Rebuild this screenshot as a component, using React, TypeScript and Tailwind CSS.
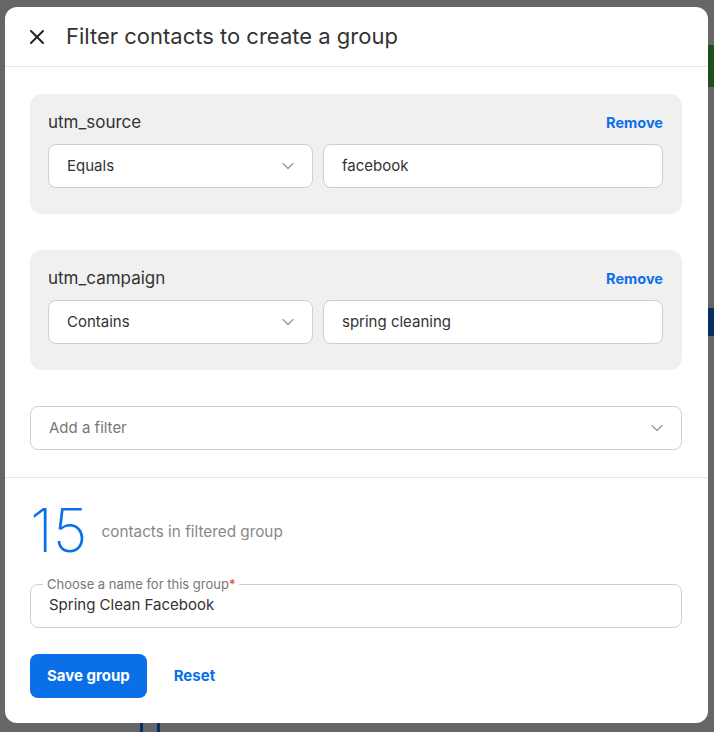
import React from "react";
import { X, ChevronDown } from "lucide-react";

const filters = [
  { field: "utm_source", op: "Equals", value: "facebook" },
  { field: "utm_campaign", op: "Contains", value: "spring cleaning" },
];

function FilterCard({ field, op, value }: { field: string; op: string; value: string }) {
  return (
    <div className="rounded-xl bg-[#f0f0f0] pl-[18px] pr-[19px] pt-[17px] pb-[26px]">
      <div className="flex h-[24px] items-center justify-between">
        <span className="text-[17px] text-[#333]">{field}</span>
        <button className="text-[14.5px] font-bold text-[#0b6fe8]">Remove</button>
      </div>
      <div className="mt-[9px] flex gap-[10px]">
        <div className="flex h-[44px] w-[265px] items-center justify-between rounded-lg border border-[#cfcfcf] bg-white pl-[18px] pr-[14px]">
          <span className="text-[15px] text-[#333]">{op}</span>
          <ChevronDown className="h-5 w-5 text-[#999]" strokeWidth={1.5} />
        </div>
        <div className="flex h-[44px] flex-1 items-center rounded-lg border border-[#cfcfcf] bg-white px-[18px]">
          <span className="text-[15px] text-[#333]">{value}</span>
        </div>
      </div>
    </div>
  );
}

export default function App() {
  return (
    <div className="relative h-[732px] w-[714px] overflow-hidden bg-[#666] font-['Inter',sans-serif]">
      {/* dimmed page behind the dialog */}
      <div className="absolute right-0 top-[45px] h-[42px] w-[6px] bg-[#1e4d1e]" />
      <div className="absolute right-0 top-[308px] h-[28px] w-[6px] bg-[#0a2c63]" />
      <div className="absolute left-[140px] top-[713px] h-[30px] w-[20px] rounded-full border-[3px] border-[#0a2c63]" />

      <div className="absolute left-[5px] top-[7px] flex h-[716px] w-[703px] flex-col rounded-xl bg-white">
        <div className="flex h-[60px] items-center border-b border-[#e5e5e5] pl-[20px]">
          <X className="h-[24px] w-[24px] text-[#222]" strokeWidth={2} />
          <h1 className="ml-[17px] text-[22px] text-[#333]">Filter contacts to create a group</h1>
        </div>

        <div className="flex flex-col gap-[36px] pl-[25px] pr-[26px] pt-[27px]">
          {filters.map((f) => (
            <FilterCard key={f.field} {...f} />
          ))}
          <div className="flex h-[44px] items-center justify-between rounded-lg border border-[#cfcfcf] bg-white pl-[18px] pr-[14px]">
            <span className="text-[15px] text-[#777]">Add a filter</span>
            <ChevronDown className="h-5 w-5 text-[#999]" strokeWidth={1.5} />
          </div>
        </div>

        <div className="mt-[27px] border-t border-[#e5e5e5] pl-[25px] pr-[26px] pt-[22px]">
          <div className="flex h-[60px] items-center gap-[14px]">
            <span className="text-[60px] font-extralight leading-[60px] text-[#0b6fe8]">15</span>
            <span className="pt-[4px] text-[15.3px] text-[#888]">contacts in filtered group</span>
          </div>

          <fieldset className="mt-[17px] h-[51px] rounded-lg border border-[#cfcfcf] px-[12px]">
            <legend className="px-[4px] text-[13px] leading-[14px] text-[#777]">
              Choose a name for this group<span className="text-[#e53935]">*</span>
            </legend>
            <div className="pl-[6px] pt-[3px] text-[15px] text-[#333]">Spring Clean Facebook</div>
          </fieldset>

          <div className="mt-[26px] flex items-center gap-[27px]">
            <button className="h-[44px] rounded-lg bg-[#0b6fe8] px-[17px] text-[15px] font-bold text-white">
              Save group
            </button>
            <button className="text-[15px] font-bold text-[#0b6fe8]">Reset</button>
          </div>
        </div>
      </div>
    </div>
  );
}
